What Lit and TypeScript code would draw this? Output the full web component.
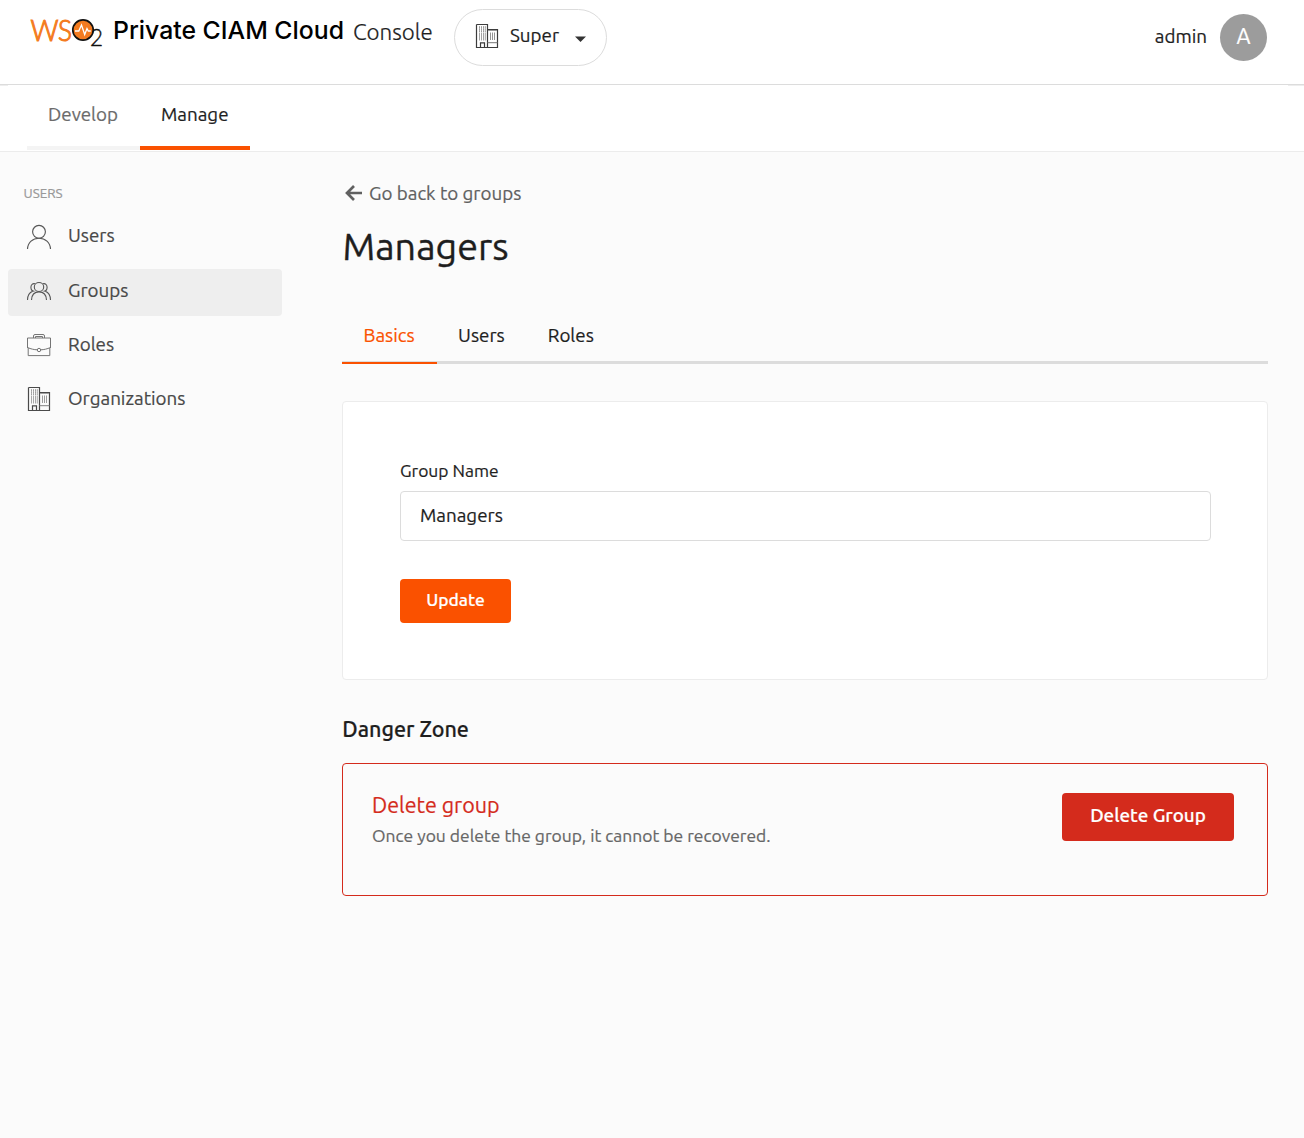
import { LitElement, html, css, svg } from "lit";
import { customElement, property, state } from "lit/decorators.js";
import { classMap } from "lit/directives/class-map.js";

const building = svg`
  <g fill="none" stroke="#3c3c3c">
    <path d="M1.5 .5h11v23M1.5 .5v23h21v-18h-10" stroke-width="1.2"/>
    <path d="M13 6.500h9" stroke="#999"/>
    <path d="M4.500 2.500v5.500M6.500 2.500v5.500M8.500 2.500v5.500M10.300 2.500v5.500" stroke-dasharray="1.100 .9" stroke="#555"/>
    <path d="M4.500 8.500v8M6.500 8.500v8M8.500 8.500v8M10.300 8.500v8" stroke="#999" stroke-width=".9"/>
    <path d="M15.500 8.500v7.500M17.500 8.500v7.500M19.500 8.500v7.500" stroke="#888" stroke-width=".9"/>
    <path d="M12.500 18.700h10" stroke="#777"/>
    <path d="M5.500 23v-4.200h4v4.200" stroke-width="1.200"/>
  </g>`;

const icons: Record<string, unknown> = {
  user: svg`
    <g fill="none" stroke="#4a4a4a" stroke-width="1.150">
      <circle cx="12" cy="7.800" r="6.400"/>
      <path d="M.5 25C.8 18.400 5.800 14.200 12 14.200S23.200 18.400 23.500 25"/>
    </g>`,
  group: svg`
    <g fill="none" stroke="#4a4a4a" stroke-width="1.100">
      <ellipse cx="12" cy="8" rx="4.700" ry="4.500"/>
      <path d="M4.500 21C4.700 16 7.600 12.900 12 12.900S19.300 16 19.500 21"/>
      <path d="M8.200 4.800C5.600 4 3.900 5.800 3.900 8.200C3.900 10.600 5.200 12.200 7.500 12.300M15.800 4.800C18.400 4 20.100 5.800 20.100 8.200C20.100 10.600 18.800 12.200 16.500 12.300"/>
      <path d="M.5 21C.6 16.500 2.300 13.500 5.700 12.300M23.500 21C23.400 16.500 21.700 13.500 18.300 12.300"/>
    </g>`,
  briefcase: svg`
    <g fill="none" stroke="#6a6a6a">
      <path d="M.5 15V5h23v10"/>
      <path d="M1.200 15v7.600h21.600V15"/>
      <path d="M.5 14.500C4 16 7 16.700 10.200 16.800M23.500 14.500C20 16 17 16.700 13.800 16.800"/>
      <circle cx="12" cy="17" r="1.700"/>
      <path d="M6.500 5V3Q6.500 1.500 8 1.500h8Q17.500 1.500 17.500 3V5M8.500 5V3.500h7V5"/>
    </g>`,
  building,
};

@customElement("ui-icon")
class UiIcon extends LitElement {
  @property() name = "user";
  static styles = css`
    :host { display: block; width: 24px; height: 24px; flex: none; }
    .glyph { display: block; overflow: visible; }
  `;
  render() {
    return html`<svg class="glyph" width="24" height="24" viewBox="0 0 24 24">${icons[this.name]}</svg>`;
  }
}

@customElement("app-root")
class AppRoot extends LitElement {
  @state() private tab = "Basics";

  static styles = css`
    :host {
      display: block;
      min-height: 1138px;
      background: #fbfbfb;
      color: #1e1e1e;
      font: 18.800px/24px Ubuntu, "Noto Sans", sans-serif;
      white-space: nowrap;
      -webkit-text-stroke: .2px;
    }
    * { box-sizing: border-box; }
    .header {
      display: flex; height: 85px; padding: 0 37px 0 30px;
      background: #fff; border-bottom: 1px solid #dcdcdc;
    }
    .logo { display: block; margin-top: 4px; width: 83px; height: 52px; flex: none; overflow: visible; }
    .logo-word { font-family: Lato, sans-serif; font-weight: 300; }
    .product { width: 240px; margin-top: 14px; font: 500 24.800px/32px Inter, sans-serif; color: #000; -webkit-text-stroke: 0; }
    .console { width: 101px; margin-top: 18px; font-size: 22.400px; line-height: 28px; font-weight: 300; }
    .switcher {
      display: flex; width: 153px; height: 57px; margin-top: 9px; padding: 14px 0 0 20px;
      border: 1px solid #dcdcdc; border-radius: 29px; background: #fff;
    }
    .switcher-name { width: 65px; margin: -1px 0 0 11px; }
    .caret { display: block; margin-top: 12px; }
    .account { display: flex; margin-left: auto; padding-top: 14px; gap: 13px; }
    .account-name { padding-top: 10px; }
    .avatar {
      width: 47px; height: 47px; border-radius: 50%; background: #9c9c9c; color: #fff;
      text-align: center; font-size: 21.500px; line-height: 45px;
    }
    .nav {
      display: flex; height: 67px; padding-left: 27px; border-bottom: 1px solid #ececec;
      background:
        linear-gradient(#ededed, #ededed) 0 0 / 8px 1px no-repeat,
        linear-gradient(#ededed, #ededed) 100% 0 / 16px 1px no-repeat,
        #fff;
    }
    .nav-item {
      height: 65px; padding: 17px 0 0 21px; border-bottom: 4px solid #f4f4f4; color: #6b6b6b;
    }
    .nav-item.wide { width: 113px; }
    .nav-item.active { width: 110px; border-color: #fa5100; color: #1e1e1e; }
    .body { display: flex; }
    .side { display: flex; flex-direction: column; width: 342px; padding: 32px 60px 0 8px; gap: 7.300px; }
    .side-title { height: 23px; padding-left: 15.500px; font-size: 13.400px; line-height: 20px; color: #999; }
    .side-item {
      display: flex; height: 47px; padding: 10px 0 0 19px; gap: 17px; border-radius: 4px; color: #484848;
    }
    .side-item.active { background: #eee; }
    .side-icon { opacity: .92; }
    .side-label { margin-top: -1px; }
    .main { width: 926px; padding-top: 29px; }
    .back { display: flex; gap: 7px; padding-left: 3px; color: #606060; }
    .arrow { display: block; margin-top: 3px; }
    .title { margin: 19px 0 0; padding-left: .5px; font-size: 37.700px; font-weight: 400; line-height: 44px; -webkit-text-stroke: .35px; }
    .tabs { display: flex; height: 96px; padding-top: 54px; border-bottom: 3px solid #dcdcdc; }
    .tab { height: 42px; padding: 1px 21.500px 0; cursor: pointer; }
    .tab.selected { width: 94.600px; border-bottom: 2px solid #fa5100; color: #fa5100; }
    .card {
      height: 279px; margin-top: 37px; padding: 57px; background: #fff;
      border: 1px solid #ececec; border-radius: 4px;
    }
    .label { font-size: 17.450px; line-height: 24px; }
    .field {
      display: block; width: 811px; height: 50px; margin-top: 8px; padding: 0 19px 2px;
      border: 1px solid #dcdcdc; border-radius: 4px; font: inherit; color: #1e1e1e; outline: 0;
    }
    .button {
      border: 0; border-radius: 4px; color: #fff; font-family: inherit; font-weight: 500; padding: 0;
    }
    .update { width: 111px; height: 44px; margin-top: 38px; background: #fa5100; font-size: 17.450px; padding-bottom: 4px; }
    .section { margin: 35px 0 0; padding-left: .3px; font-size: 21.500px; font-weight: 500; line-height: 28px; }
    .danger {
      display: flex; justify-content: space-between; height: 133px; margin-top: 20px;
      padding: 27px 33px 0 29px; border: 1px solid #d42b1c; border-radius: 4px;
    }
    .danger-title { color: #d42b1c; font-size: 21.500px; line-height: 28px; }
    .danger-text { margin-top: 5px; color: #666; font-size: 17.480px; line-height: 24px; }
    .delete { width: 172px; height: 48px; margin-top: 2px; padding-bottom: 4px; background: #d42b1c; font-size: 18.850px; }
  `;

  render() {
    const sideItems = [
      ["user", "Users"], ["group", "Groups"], ["briefcase", "Roles"], ["building", "Organizations"],
    ];
    return html`
      <div class="header">
        <svg class="logo" width="83" height="52" viewBox="30 4 83 52">
          <g class="logo-word">
            <text x="30.500" y="40.500" font-size="29.500" fill="#f47b20" stroke="#f47b20" stroke-width="1.100" textLength="28" lengthAdjust="spacingAndGlyphs">W</text>
            <text x="58" y="40.500" font-size="29.500" fill="#f47b20" stroke="#f47b20" stroke-width="1.100" textLength="14" lengthAdjust="spacingAndGlyphs">S</text>
            <text x="90" y="46" font-size="24" fill="#111" stroke="#111" stroke-width=".4" textLength="13" lengthAdjust="spacingAndGlyphs">2</text>
          </g>
          <circle cx="83" cy="30" r="10.200" fill="#f47b20" stroke="#111" stroke-width="1.700"/>
          <path d="M75 31h3.800l2.700-6 3.200 9.500 2.300-6 1.300 2.500h2.500" fill="none" stroke="#fff" stroke-width="1.300"/>
        </svg>
        <div class="product">Private CIAM Cloud</div>
        <div class="console">Console</div>
        <div class="switcher">
          <ui-icon name="building"></ui-icon>
          <div class="switcher-name">Super</div>
          <svg class="caret" width="11" height="6" viewBox="0 0 11 6"><path d="M0 .5h11L5.500 6z" fill="#333"/></svg>
        </div>
        <div class="account">
          <div class="account-name">admin</div>
          <div class="avatar">A</div>
        </div>
      </div>
      <div class="nav">
        <div class="nav-item wide">Develop</div>
        <div class="nav-item active">Manage</div>
      </div>
      <div class="body">
        <div class="side">
          <div class="side-title">USERS</div>
          ${sideItems.map(([icon, label]) => html`
            <div class=${classMap({ "side-item": true, active: label === "Groups" })}>
              <ui-icon class="side-icon" name=${icon}></ui-icon>
              <div class="side-label">${label}</div>
            </div>`)}
        </div>
        <div class="main">
          <div class="back">
            <svg class="arrow" width="17" height="18" viewBox="0 0 17 18">
              <path d="M9 2L2 9l7 7M2.500 9H17" fill="none" stroke="#606060" stroke-width="2.700"/>
            </svg>
            <span>Go back to groups</span>
          </div>
          <h1 class="title">Managers</h1>
          <div class="tabs">
            ${["Basics", "Users", "Roles"].map((t) => html`
              <div class=${classMap({ tab: true, selected: t === this.tab })} @click=${() => (this.tab = t)}>${t}</div>`)}
          </div>
          <div class="card">
            <div class="label">Group Name</div>
            <input class="field" .value=${"Managers"}>
            <button class="button update">Update</button>
          </div>
          <h2 class="section">Danger Zone</h2>
          <div class="danger">
            <div>
              <div class="danger-title">Delete group</div>
              <div class="danger-text">Once you delete the group, it cannot be recovered.</div>
            </div>
            <button class="button delete">Delete Group</button>
          </div>
        </div>
      </div>`;
  }
}
